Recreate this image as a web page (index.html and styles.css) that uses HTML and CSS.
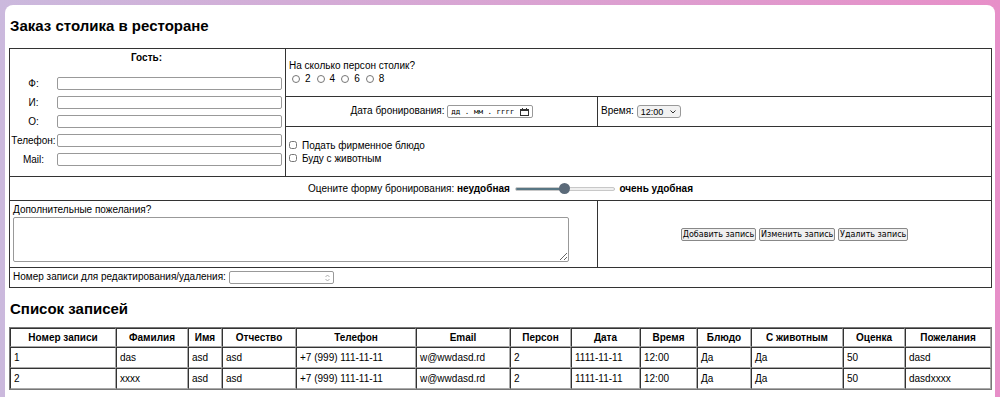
FILE: index.html
```html
<!DOCTYPE html>
<html lang="ru">
<head>
<meta charset="utf-8">
<title>Заказ столика в ресторане</title>
<link rel="stylesheet" href="styles.css">
</head>
<body>
<div class="page">
  <h2 class="title">Заказ столика в ресторане</h2>
  <table class="form">
    <colgroup><col class="c1"><col class="c2"><col class="c3"></colgroup>
    <tr class="r1">
      <td rowspan="3" class="guest">
        <div class="guest-title">Гость:</div>
        <div class="guest-grid">
          <label>Ф:</label><input type="text">
          <label>И:</label><input type="text">
          <label>О:</label><input type="text">
          <label>Телефон:</label><input type="text">
          <label>Mail:</label><input type="text">
        </div>
      </td>
      <td colspan="2" class="persons">
        <div>На сколько персон столик?</div>
        <div class="radios">
          <label><input type="radio" name="p"> 2</label>
          <label><input type="radio" name="p"> 4</label>
          <label><input type="radio" name="p"> 6</label>
          <label><input type="radio" name="p"> 8</label>
        </div>
      </td>
    </tr>
    <tr class="r2">
      <td class="date">Дата бронирования: <span class="fake-date"><span class="dtext">дд . мм . гггг</span><svg class="cal" width="9" height="8" viewBox="0 0 9 8"><rect x="0.5" y="1.5" width="8" height="6" fill="none" stroke="#333" stroke-width="1"/><rect x="0.5" y="1.5" width="8" height="1.5" fill="#333"/><rect x="2" y="0" width="1" height="2" fill="#333"/><rect x="6" y="0" width="1" height="2" fill="#333"/></svg></span></td>
      <td class="time">Время: <span class="fake-select"><span>12:00</span><svg width="6" height="4" viewBox="0 0 6 4"><path d="M0.5 0.5 L3 3 L5.5 0.5" fill="none" stroke="#333" stroke-width="1"/></svg></span></td>
    </tr>
    <tr class="r3">
      <td colspan="2" class="checks">
        <label><input type="checkbox"> Подать фирменное блюдо</label>
        <label><input type="checkbox"> Буду с животным</label>
      </td>
    </tr>
    <tr class="r4">
      <td colspan="3" class="rate">Оцените форму бронирования: <b>неудобная</b> <input type="range" class="range" min="0" max="100" value="50"> <b>очень удобная</b></td>
    </tr>
    <tr class="r5">
      <td colspan="2" class="wishes">
        <div>Дополнительные пожелания?</div>
        <textarea></textarea>
      </td>
      <td class="buttons">
        <button>Добавить запись</button>
        <button>Изменить запись</button>
        <button>Удалить запись</button>
      </td>
    </tr>
    <tr class="r6">
      <td colspan="3" class="edit">Номер записи для редактирования/удаления: <span class="fake-num"><svg width="5" height="8" viewBox="0 0 5 8"><path d="M0.5 3 L2.5 1 L4.5 3 M0.5 5 L2.5 7 L4.5 5" fill="none" stroke="#999" stroke-width="0.8"/></svg></span></td>
    </tr>
  </table>

  <h2 class="title list-title">Список записей</h2>
  <table class="records">
    <colgroup>
      <col style="width:106px"><col style="width:72px"><col style="width:34px"><col style="width:74px">
      <col style="width:120px"><col style="width:94px"><col style="width:61px"><col style="width:69px">
      <col style="width:57px"><col style="width:54px"><col style="width:92px"><col style="width:62px"><col style="width:86px">
    </colgroup>
    <tr class="head">
      <th>Номер записи</th><th>Фамилия</th><th>Имя</th><th>Отчество</th><th>Телефон</th><th>Email</th><th>Персон</th><th>Дата</th><th>Время</th><th>Блюдо</th><th>С животным</th><th>Оценка</th><th>Пожелания</th>
    </tr>
    <tr>
      <td>1</td><td>das</td><td>asd</td><td>asd</td><td>+7 (999) 111-11-11</td><td>w@wwdasd.rd</td><td>2</td><td>1111-11-11</td><td>12:00</td><td>Да</td><td>Да</td><td>50</td><td>dasd</td>
    </tr>
    <tr>
      <td>2</td><td>xxxx</td><td>asd</td><td>asd</td><td>+7 (999) 111-11-11</td><td>w@wwdasd.rd</td><td>2</td><td>1111-11-11</td><td>12:00</td><td>Да</td><td>Да</td><td>50</td><td>dasdxxxx</td>
    </tr>
  </table>
</div>
</body>
</html>
```
FILE: styles.css
```css
html, body {
  margin: 0;
  padding: 0;
  height: 100%;
}
body {
  background: linear-gradient(to right, #cbb9dd, #e78fc8);
  font-family: "Liberation Sans", Arial, sans-serif;
  font-size: 10px;
  line-height: 12px;
  color: #000;
  overflow: hidden;
}
.page {
  margin: 5px 5px 0 5px;
  background: #fff;
  border-radius: 8px 8px 0 0;
  padding: 1px 4px 20px 4px;
  min-height: 400px;
}
.title {
  font-size: 15px;
  font-weight: bold;
  margin: 11px 0 13px 1px;
  line-height: 18px;
}
.list-title {
  margin: 12px 0 9px 1px;
}
.form {
  width: 982px;
  border-collapse: collapse;
  table-layout: fixed;
}
.form td {
  border: 1px solid #333;
  padding: 0 2px;
  vertical-align: middle;
}
.c1 { width: 276px; }
.c2 { width: 312px; }
.c3 { width: 394px; }
.r1 { height: 48px; }
.r2 { height: 30px; }
.r3 { height: 50px; }
.r4 { height: 24px; }
.r5 { height: 67px; }
.r6 { height: 20px; }

.form td.guest { padding: 3px 2px 0 0; vertical-align: top; }
.guest-title {
  text-align: center;
  font-weight: bold;
  margin-bottom: 13px;
}
.guest-grid {
  display: grid;
  grid-template-columns: 47px 225px;
  row-gap: 6px;
  align-items: center;
}
.guest-grid label { text-align: center; }
.guest-grid input {
  height: 13px;
  box-sizing: border-box;
  border: 1px solid #999;
  border-radius: 2px;
  margin: 0;
  padding: 0 2px;
  font-size: 9px;
}
.form td.persons { padding-left: 3px; }
.radios { display: flex; gap: 6px; padding-left: 3px; margin-top: 1px; }
.radios label { display: flex; align-items: center; gap: 5px; }
input[type=radio], input[type=checkbox] {
  width: 8px;
  height: 8px;
  margin: 0;
}
.date { text-align: center; }
.fake-date {
  display: inline-flex;
  align-items: center;
  gap: 5px;
  height: 13px;
  box-sizing: border-box;
  border: 1px solid #999;
  border-radius: 2px;
  padding: 0 3px;
  vertical-align: middle;
  white-space: nowrap;
}
.dtext {
  font-family: "DejaVu Sans Mono", monospace;
  font-size: 7.5px;
  line-height: 11px;
  color: #000;
}
.form td.time { padding-left: 3px; }
.fake-select {
  display: inline-flex;
  align-items: center;
  justify-content: space-between;
  width: 44px;
  height: 13px;
  box-sizing: border-box;
  border: 1px solid #999;
  border-radius: 3px;
  background: #f2f2f2;
  padding: 0 4px 0 3px;
  font-size: 9px;
  vertical-align: middle;
}
.form td.checks { padding-left: 3px; }
.checks label { display: flex; align-items: center; gap: 5px; line-height: 13px; }
.rate { text-align: center; }
.rate b { font-weight: bold; }
.range {
  -webkit-appearance: none;
  appearance: none;
  width: 100px;
  height: 11px;
  margin: 0 2px;
  vertical-align: middle;
  background: transparent;
}
.range::-webkit-slider-runnable-track {
  height: 4px;
  border-radius: 2px;
  background: linear-gradient(to right, #587684 50%, #efefef 50%);
  border: 1px solid #c8c8c8;
  box-sizing: border-box;
}
.range::-webkit-slider-thumb {
  -webkit-appearance: none;
  width: 11px;
  height: 11px;
  border-radius: 50%;
  background: #5b6a79;
  margin-top: -4.5px;
}
.form td.wishes { padding: 3px 2px 3px 3px; vertical-align: top; }
.wishes textarea {
  display: block;
  width: 556px;
  height: 45px;
  box-sizing: border-box;
  margin-top: 1px;
  border: 1px solid #999;
  border-radius: 2px;
  resize: both;
}
.buttons { text-align: center; }
.buttons button {
  font-family: "DejaVu Sans", sans-serif;
  font-size: 8px;
  padding: 1px 1px;
  height: 13px;
  line-height: 9px;
  border: 1px solid #888;
  border-radius: 2px;
  background: #efefef;
  color: #000;
  margin: 0;
}
.form td.edit { padding-left: 3px; }
.fake-num {
  display: inline-flex;
  align-items: center;
  justify-content: flex-end;
  width: 105px;
  height: 13px;
  box-sizing: border-box;
  border: 1px solid #999;
  border-radius: 2px;
  vertical-align: middle;
  padding-right: 3px;
}
.records {
  width: 982px;
  border-collapse: separate;
  border-spacing: 0;
  border: 1px solid #777;
  table-layout: fixed;
}
.records th, .records td {
  border: 1px solid #333;
  border-color: #333 #aaa #aaa #333;
  height: 15px;
  padding: 2px 3px;
  white-space: nowrap;
  overflow: hidden;
}
.records .head th { height: 13px; }
.records th { text-align: center; font-weight: bold; }
.records td { text-align: left; }
```
